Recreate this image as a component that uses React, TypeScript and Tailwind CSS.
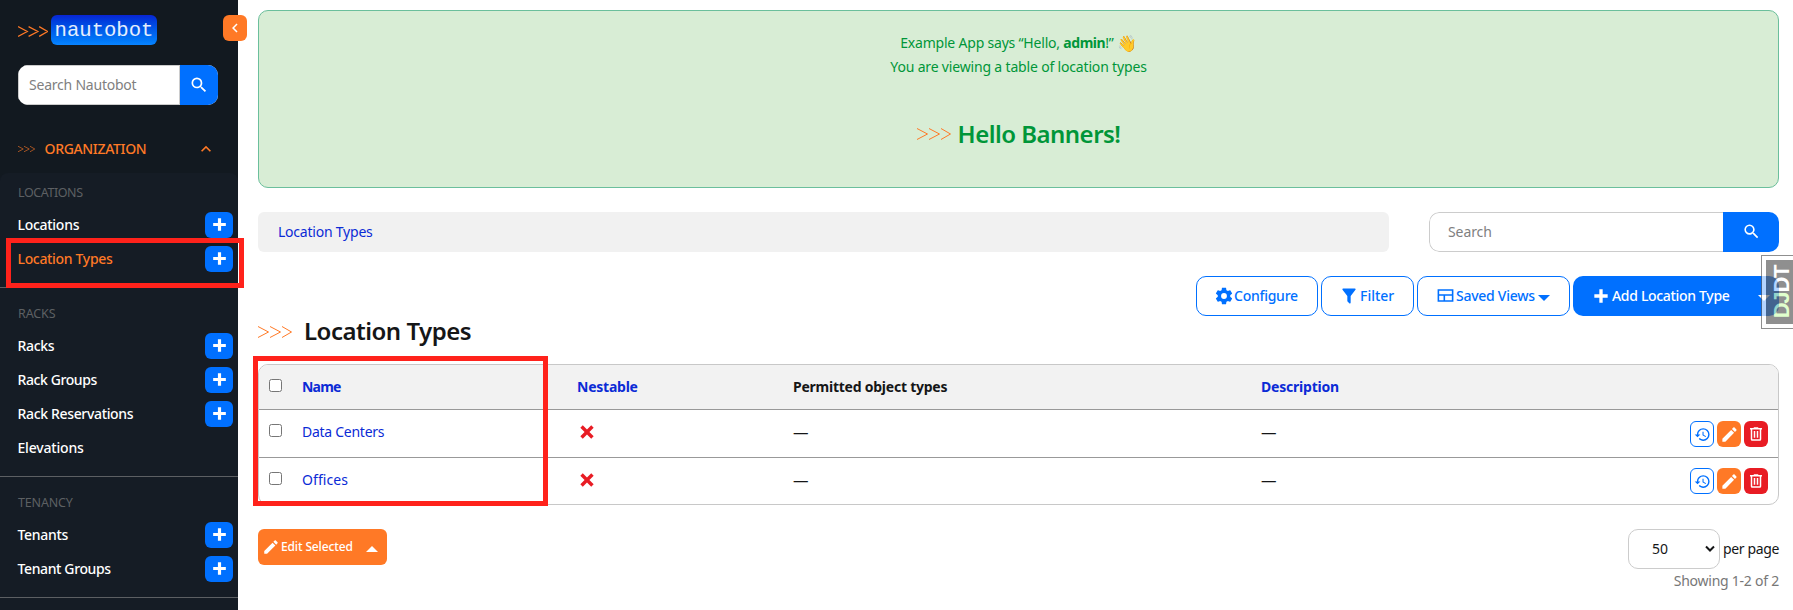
import type { ReactNode } from "react";

const paths = {
  magnify:
    "M9.5,3A6.5,6.5 0 0,1 16,9.5C16,11.11 15.41,12.59 14.44,13.73L14.71,14H15.5L20.5,19L19,20.5L14,15.5V14.71L13.73,14.44C12.59,15.41 11.11,16 9.5,16A6.5,6.5 0 0,1 3,9.5A6.5,6.5 0 0,1 9.5,3M9.5,5C7,5 5,7 5,9.5C5,12 7,14 9.5,14C12,14 14,12 14,9.5C14,7 12,5 9.5,5Z",
  plus: "M20 14H14V20H10V14H4V10H10V4H14V10H20V14Z",
  close:
    "M20 6.91L17.09 4L12 9.09L6.91 4L4 6.91L9.09 12L4 17.09L6.91 20L12 14.91L17.09 20L20 17.09L14.91 12L20 6.91Z",
  cog: "M12,15.5A3.5,3.5 0 0,1 8.5,12A3.5,3.5 0 0,1 12,8.5A3.5,3.5 0 0,1 15.5,12A3.5,3.5 0 0,1 12,15.5M19.43,12.97C19.47,12.65 19.5,12.33 19.5,12C19.5,11.67 19.47,11.34 19.43,11L21.54,9.37C21.73,9.22 21.78,8.95 21.66,8.73L19.66,5.27C19.54,5.05 19.27,4.96 19.05,5.05L16.56,6.05C16.04,5.66 15.5,5.32 14.87,5.07L14.5,2.42C14.46,2.18 14.25,2 14,2H10C9.75,2 9.54,2.18 9.5,2.42L9.13,5.07C8.5,5.32 7.96,5.66 7.44,6.05L4.95,5.05C4.73,4.96 4.46,5.05 4.34,5.27L2.34,8.73C2.21,8.95 2.27,9.22 2.46,9.37L4.57,11C4.53,11.34 4.5,11.67 4.5,12C4.5,12.33 4.53,12.65 4.57,12.97L2.46,14.63C2.27,14.78 2.21,15.05 2.34,15.27L4.34,18.73C4.46,18.95 4.73,19.03 4.95,18.95L7.44,17.94C7.96,18.34 8.5,18.68 9.13,18.93L9.5,21.58C9.54,21.82 9.75,22 10,22H14C14.25,22 14.46,21.82 14.5,21.58L14.87,18.93C15.5,18.67 16.04,18.34 16.56,17.94L19.05,18.95C19.27,19.03 19.54,18.95 19.66,18.73L21.66,15.27C21.78,15.05 21.73,14.78 21.54,14.63L19.43,12.97Z",
  filter:
    "M14,12V19.88C14.04,20.18 13.94,20.5 13.71,20.71C13.32,21.1 12.69,21.1 12.3,20.71L10.29,18.7C10.06,18.47 9.96,18.16 10,17.87V12H9.97L4.21,4.62C3.87,4.19 3.95,3.56 4.38,3.22C4.57,3.08 4.78,3 5,3H19C19.22,3 19.43,3.08 19.62,3.22C20.05,3.56 20.13,4.19 19.79,4.62L14.03,12H14Z",
  views: "M2,4H22V20H2V4M4,6V10.3H20V6H4M4,12.3V18H9.5V12.3H4M11.5,12.3V18H20V12.3H11.5Z",
  pencil:
    "M20.71,7.04C21.1,6.65 21.1,6 20.71,5.63L18.37,3.29C18,2.9 17.35,2.9 16.96,3.29L15.12,5.12L18.87,8.87M3,17.25V21H6.75L17.81,9.93L14.06,6.18L3,17.25Z",
  trash:
    "M9,3V4H4V6H5V19A2,2 0 0,0 7,21H17A2,2 0 0,0 19,19V6H20V4H15V3H9M7,6H17V19H7V6M9,8V17H11V8H9M13,8V17H15V8H13Z",
  history:
    "M13.5,8H12V13L16.28,15.54L17,14.33L13.5,12.25V8M13,3A9,9 0 0,0 4,12H1L4.96,16.03L9,12H6A7,7 0 0,1 13,5A7,7 0 0,1 20,12A7,7 0 0,1 13,19C11.07,19 9.32,18.21 8.06,16.94L6.64,18.36C8.27,20 10.5,21 13,21A9,9 0 0,0 22,12A9,9 0 0,0 13,3",
  chevronUp: "M7.41,15.41L12,10.83L16.59,15.41L18,14L12,8L6,14L7.41,15.41Z",
  chevronLeft: "M15.41,16.58L10.83,12L15.41,7.41L14,6L8,12L14,18L15.41,16.58Z",
};

function Icon({ name, className = "size-[19px]" }: { name: keyof typeof paths; className?: string }) {
  return (
    <svg viewBox="0 0 24 24" fill="currentColor" className={`shrink-0 ${className}`}>
      <path d={paths[name]} />
    </svg>
  );
}

function Caret({ up = false, className = "" }: { up?: boolean; className?: string }) {
  return (
    <svg viewBox="0 0 12 6" fill="currentColor" className={`h-[6px] w-[12px] shrink-0 ${className}`}>
      <path d={up ? "M0 6L6 0L12 6Z" : "M0 0L6 6L12 0Z"} />
    </svg>
  );
}

function Prompt({ className, stroke = 1 }: { className: string; stroke?: number }) {
  return (
    <svg viewBox="0 0 34 12" fill="none" stroke="#ff7926" strokeWidth={stroke} className={`shrink-0 ${className}`}>
      <path d="M0 .5L10.5 6L0 11.5M12 .5L22.5 6L12 11.5M24 .5L33.5 6L24 11.5" />
    </svg>
  );
}

interface Item {
  label: string;
  tracking: string;
  active?: boolean;
  plain?: boolean;
}

function Group({ title, titleClass, pad, items }: { title: string; titleClass: string; pad: string; items: Item[] }) {
  return (
    <div className={`border-b border-[#5c5f63] pb-[11px] ${pad}`}>
      <div className={`flex h-8 items-center pt-[2px] pl-[18px] text-[12.5px] text-[#5d6063] ${titleClass}`}>
        {title}
      </div>
      {items.map((item) => (
        <div key={item.label} className="flex h-[34px] items-center justify-between pr-[5px] pl-[17.5px]">
          <span className={`font-medium ${item.active ? "text-[#ff7926]" : "text-white"} ${item.tracking}`}>
            {item.label}
          </span>
          {!item.plain && (
            <span className="flex h-[26px] w-7 items-center justify-center rounded-[6px] bg-[#0070ff] pb-px text-white">
              <Icon name="plus" />
            </span>
          )}
        </div>
      ))}
    </div>
  );
}

function Sidebar() {
  return (
    <aside className="relative flex h-full w-[238px] shrink-0 flex-col bg-[#121920]">
      <div className="mt-[15px] ml-[18px] flex h-[30px] items-center">
        <Prompt className="mt-[3px] h-[13px] w-[30px]" stroke={1.4} />
        <span className="ml-[3px] flex h-[30px] w-[106px] items-center justify-center rounded-[6px] bg-linear-to-b from-[#0a24d4] to-[#0a84ff] pt-px font-['Liberation_Mono',monospace] text-[20.6px] text-white/90">
          nautobot
        </span>
      </div>
      <div className="absolute top-[15px] left-[223px] flex h-[26px] w-6 items-center justify-center rounded-[6px] bg-[#ff7926] text-white">
        <Icon name="chevronLeft" className="size-[18px]" />
      </div>
      <div className="mt-5 ml-[18px] flex h-10 w-[200px] overflow-hidden rounded-[10px] bg-white">
        <span className="flex flex-1 items-center border border-[#ccc] pl-[10px] tracking-[-0.22px] text-[#808080]">
          Search Nautobot
        </span>
        <span className="flex w-[38px] items-center justify-center bg-[#0070ff] pb-px text-white">
          <Icon name="magnify" className="size-5" />
        </span>
      </div>
      <div className="mt-6 flex h-11 items-center pb-[4px] pl-[18px] text-[#ff7926]">
        <Prompt className="h-[6px] w-[17px]" stroke={1.2} />
        <span className="ml-[9.5px] font-medium tracking-[-0.34px]">ORGANIZATION</span>
        <Icon name="chevronUp" className="ml-[50px] size-5" />
      </div>
      <div className="flex-1 overflow-hidden rounded-t-lg bg-[#151c25]">
        <Group
          title="LOCATIONS"
          titleClass="tracking-[-0.42px]"
          pad="pt-[3px]"
          items={[
            { label: "Locations", tracking: "tracking-[-0.28px]" },
            { label: "Location Types", tracking: "tracking-[-0.33px]", active: true },
          ]}
        />
        <Group
          title="RACKS"
          titleClass="tracking-[-0.1px]"
          pad="pt-[9px]"
          items={[
            { label: "Racks", tracking: "tracking-[-0.3px]" },
            { label: "Rack Groups", tracking: "tracking-[-0.4px]" },
            { label: "Rack Reservations", tracking: "tracking-[-0.34px]" },
            { label: "Elevations", tracking: "tracking-[-0.18px]", plain: true },
          ]}
        />
        <Group
          title="TENANCY"
          titleClass="tracking-[-0.16px]"
          pad="pt-[9px]"
          items={[
            { label: "Tenants", tracking: "tracking-[-0.3px]" },
            { label: "Tenant Groups", tracking: "tracking-[-0.38px]" },
          ]}
        />
      </div>
      <div className="absolute top-[238px] left-[6px] z-10 h-[50px] w-[238px] border-5 border-[#ff221b]" />
    </aside>
  );
}

function OutlineButton({ className, children }: { className: string; children: ReactNode }) {
  return (
    <div
      className={`flex h-10 items-center rounded-[10px] border border-[#0070ff] pb-px font-medium text-[#0070ff] ${className}`}
    >
      {children}
    </div>
  );
}

function Box() {
  return <span className="block size-[13px] rounded-[2.5px] border border-[#767676] bg-white" />;
}

const columns = "grid grid-cols-[43px_275px_216px_468px_1fr]";

function Row({ name, tracking, last = false }: { name: string; tracking: string; last?: boolean }) {
  return (
    <div className={`${columns} ${last ? "h-[46px]" : "h-12 border-b border-[#999]"}`}>
      <div className="pt-[14px] pl-[10px]">
        <Box />
      </div>
      <div className={`pt-3 text-[#0b2bd6] ${tracking}`}>{name}</div>
      <div className="pt-[12px] text-[#e81c24]">
        <Icon name="close" className="size-5" />
      </div>
      <div className="pt-[12px] text-[15.5px]">—</div>
      <div className="flex justify-between">
        <span className="pt-[12px] text-[15.5px]">—</span>
        <div className={`flex gap-[3px] pr-[10px] ${last ? "pt-[10px]" : "pt-[11px]"}`}>
          <span className="flex h-[26px] w-6 items-center justify-center rounded-[6px] border border-[#0070ff] text-[#0070ff]">
            <Icon name="history" className="size-[17px]" />
          </span>
          <span className="flex h-[26px] w-6 items-center justify-center rounded-[6px] bg-[#ff7926] text-white">
            <Icon name="pencil" />
          </span>
          <span className="flex h-[26px] w-6 items-center justify-center rounded-[6px] bg-[#e81c24] text-white">
            <Icon name="trash" className="size-[18px]" />
          </span>
        </div>
      </div>
    </div>
  );
}

export default function App() {
  return (
    <div className="relative flex h-[610px] w-[1793px] overflow-hidden bg-white font-['Noto_Sans',sans-serif] text-[14px] leading-5 text-[#151617]">
      <Sidebar />
      <main className="flex-1 pt-[10px] pr-[14px] pl-5">
        <section className="flex h-[178px] flex-col items-center rounded-[10px] border border-[#6bbf9c] bg-[#d8edd5] pt-[20px] text-[#009639]">
          <p className="flex h-6 items-center whitespace-pre">
            <span className="tracking-[-0.2px]">Example App says “Hello, </span>
            <b className="tracking-[-0.45px]">admin</b>
            <span className="tracking-[-0.3px]">!” </span>
            <span className="text-[16px]">👋</span>
          </p>
          <p className="flex h-6 items-center tracking-[-0.17px]">You are viewing a table of location types</p>
          <h2 className="mt-[39px] flex items-center text-[24px] leading-8 font-semibold tracking-[-0.52px]">
            <Prompt className="mr-[7px] h-3 w-[34px]" />
            Hello Banners!
          </h2>
        </section>

        <div className="mt-6 flex h-10 justify-between">
          <div className="flex w-[1131px] items-center rounded-[6px] bg-[#f1f1f1] pl-5 tracking-[-0.22px] text-[#0b2bd6]">
            Location Types
          </div>
          <div className="flex w-[350px] overflow-hidden rounded-[10px]">
            <span className="flex flex-1 items-center rounded-l-[10px] border border-r-0 border-[#ccc] pl-[18px] tracking-[-0.1px] text-[#808080]">
              Search
            </span>
            <span className="flex w-14 items-center justify-center bg-[#0070ff] pb-px text-white">
              <Icon name="magnify" />
            </span>
          </div>
        </div>

        <div className="mt-6 flex h-10 justify-end gap-[3px]">
          <OutlineButton className="w-[122px] pl-[17px]">
            <Icon name="cog" className="size-5" />
            <span className="tracking-[-0.26px]">Configure</span>
          </OutlineButton>
          <OutlineButton className="w-[93px] pl-[17px]">
            <Icon name="filter" className="size-5" />
            <span className="ml-px">Filter</span>
          </OutlineButton>
          <OutlineButton className="w-[153px] pl-[18px]">
            <Icon name="views" />
            <span className="ml-px tracking-[-0.27px]">Saved Views</span>
            <Caret className="mt-1 ml-[3px]" />
          </OutlineButton>
          <div className="flex w-[206px] items-center rounded-[10px] bg-[#0070ff] pb-px pl-[18px] font-medium text-white">
            <Icon name="plus" className="size-5" />
            <span className="ml-px tracking-[-0.32px]">Add Location Type</span>
            <Caret className="mt-1 ml-[29px]" />
          </div>
        </div>

        <h1 className="flex h-8 items-center pb-[2px] text-[24px] leading-8 font-semibold tracking-[-0.5px]">
          <Prompt className="mt-[2px] mr-3 h-3 w-[34px]" />
          Location Types
        </h1>

        <section className="mt-4 h-[141px] overflow-hidden rounded-[10px] border border-[#c8c8c8]">
          <div className={`${columns} h-[45px] border-b border-[#999] bg-[#f2f2f2] font-bold`}>
            <div className="pt-[14px] pl-[10px]">
              <Box />
            </div>
            <div className="pt-3 tracking-[-0.8px] text-[#0b2bd6]">Name</div>
            <div className="pt-3 tracking-[-0.24px] text-[#0b2bd6]">Nestable</div>
            <div className="pt-3 tracking-[-0.24px]">Permitted object types</div>
            <div className="pt-3 tracking-[-0.21px] text-[#0b2bd6]">Description</div>
          </div>
          <Row name="Data Centers" tracking="tracking-[-0.27px]" />
          <Row name="Offices" tracking="tracking-[0.08px]" last />
        </section>

        <div className="mt-6 flex justify-between">
          <div className="flex h-9 w-[129px] items-center rounded-[6px] bg-[#ff7926] pl-[4px] text-[12px] font-medium text-white">
            <Icon name="pencil" className="size-[18px]" />
            <span className="ml-px tracking-[-0.14px]">Edit Selected</span>
            <Caret up className="mt-1 ml-[13px]" />
          </div>
          <div className="flex flex-col items-end">
            <div className="flex items-center gap-[3px]">
              <div className="flex h-10 w-[92px] items-center justify-between rounded-[10px] border border-[#ccc] pr-[4px] pl-[23px]">
                50
                <svg viewBox="0 0 10 8" fill="none" stroke="currentColor" strokeWidth="2" className="h-2 w-[10px]">
                  <path d="M1 1.5L5 5.5L9 1.5" />
                </svg>
              </div>
              <span className="tracking-[-0.36px]">per page</span>
            </div>
            <p className="mt-[2px] tracking-[-0.24px] text-[#777]">Showing 1-2 of 2</p>
          </div>
        </div>
      </main>

      <div className="absolute top-[356px] left-[253px] h-[150px] w-[295px] border-5 border-[#ff221b]" />
      <div className="absolute top-[255px] left-[1761px] h-[74px] w-8 border border-r-0 border-[#606060] bg-white py-1 pl-1 opacity-70">
        <div className="flex h-full items-center justify-center overflow-hidden bg-[#606060] pl-[5px]">
          <span className="-rotate-90 font-['Liberation_Sans',sans-serif] text-[22px] font-bold tracking-[-1.2px] text-white">
            <span className="text-[#d4ffb8]">DJ</span>DT
          </span>
        </div>
      </div>
    </div>
  );
}
